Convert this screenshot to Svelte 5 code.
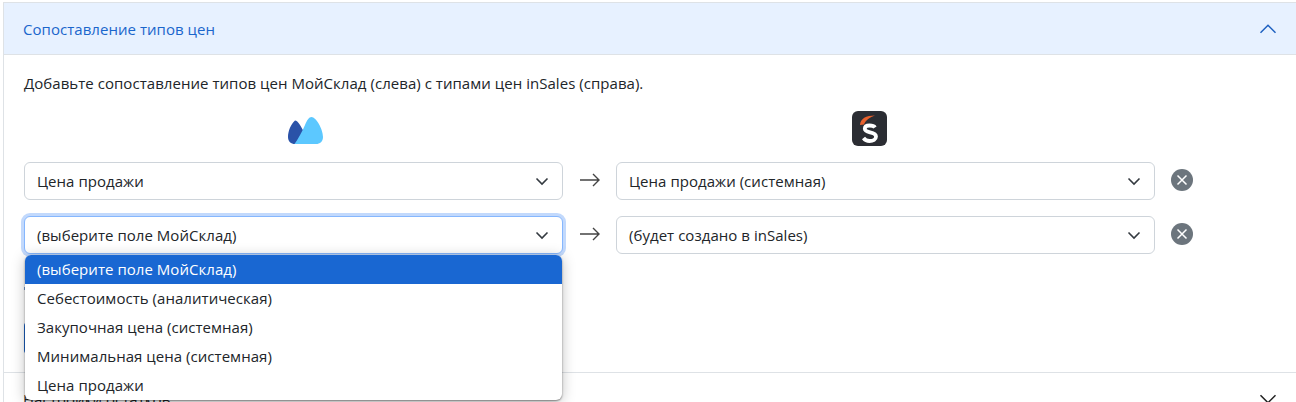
<script>
	const leftOptions = [
		"(выберите поле МойСклад)",
		"Себестоимость (аналитическая)",
		"Закупочная цена (системная)",
		"Минимальная цена (системная)",
		"Цена продажи",
	]
	const rows = [
		{left: "Цена продажи", right: "Цена продажи (системная)"},
		{left: "(выберите поле МойСклад)", right: "(будет создано в inSales)", open: true},
	]
</script>

<div class="accordion">
	<section class="item">
		<header class="head active">
			<span>Сопоставление типов цен</span>
			<svg class="chev" viewBox="0 0 16 16" width="20" height="20">
				<path d="M2 11 L8 5 L14 11" fill="none" stroke="#1e60c0" stroke-width="1.2" />
			</svg>
		</header>
		<div class="body">
			<p class="hint">Добавьте сопоставление типов цен МойСклад (слева) с типами цен inSales (справа).</p>
			<div class="row logos">
				<div class="col logo left">
					<svg viewBox="0 0 35 27" width="35" height="27">
						<path d="M7 3.500 C3 7 0 14 0 20 C0 24.500 3 27 7 27 L12 27 L16 15 C13 9.500 10 3.500 7 3.500 Z" fill="#2a52a8" />
						<path d="M23.500 0 C21 0 19 3 17 8 C14 15 10 22 6.500 27 L28 27 C32 27 35 24.500 35 20 C35 12 28 0 23.500 0 Z" fill="#5cc8ff" />
					</svg>
				</div>
				<div class="gap"></div>
				<div class="col logo right">
					<svg viewBox="0 0 35 35" width="35" height="35">
						<rect width="35" height="35" rx="6" fill="#2b2d33" />
						<path d="M8 14 C8.500 7.500 14 4.500 23 4.500 C18 6.500 13.500 9 12 13.500 Z" fill="#e8602c" />
						<path d="M23 16.500 C22 15 20 14.500 17.500 14.500 C14.500 14.500 12.800 15.800 12.800 17.800 C12.800 22.500 24 20 24 25.500 C24 28.500 21 30 17.500 30 C15 30 13 29 11.500 27" fill="none" stroke="#fff" stroke-width="3.800" />
					</svg>
				</div>
			</div>
			{#each rows as row}
				<div class="row">
					<div class="col">
						<div class="select" class:focus={row.open}>
							<span>{row.left}</span>
							<svg viewBox="0 0 16 16" width="16" height="16">
								<path d="M2.500 5.500 L8 11 L13.500 5.500" fill="none" stroke="#343a40" stroke-width="1.600" />
							</svg>
						</div>
						{#if row.open}
							<ul class="menu">
								{#each leftOptions as opt, i}
									<li class:sel={i === 0}>{opt}</li>
								{/each}
							</ul>
						{/if}
					</div>
					<div class="gap arrow">
						<svg viewBox="0 0 20 14" width="20" height="14">
							<path d="M0 7 H19 M13 1 L19 7 L13 13" fill="none" stroke="#444" stroke-width="1.400" />
						</svg>
					</div>
					<div class="col">
						<div class="select">
							<span>{row.right}</span>
							<svg viewBox="0 0 16 16" width="16" height="16">
								<path d="M2.500 5.500 L8 11 L13.500 5.500" fill="none" stroke="#343a40" stroke-width="1.600" />
							</svg>
						</div>
					</div>
					<svg class="remove" viewBox="0 0 22 22" width="22" height="22">
						<circle cx="11" cy="11" r="11" fill="#6c757d" />
						<path d="M6.500 6.500 L15.500 15.500 M15.500 6.500 L6.500 15.500" stroke="#fff" stroke-width="1.500" />
					</svg>
				</div>
			{/each}
			<div class="add-wrap">
				<span class="note-dot"></span>
				<button class="add" aria-label="Добавить"></button>
			</div>
		</div>
	</section>
	<section class="item">
		<header class="head">
			<span>Настройки остатков</span>
			<svg class="chev" viewBox="0 0 16 16" width="20" height="20">
				<path d="M2 5 L8 11 L14 5" fill="none" stroke="#222" stroke-width="1.200" />
			</svg>
		</header>
	</section>
</div>

<style>
	:global(body) {
		margin: 0;
		height: 402px;
		overflow: hidden;
		background: #fff;
	}

	.accordion {
		margin: 2px 0 0 3px;
		font-family: "Open Sans", "Noto Sans", sans-serif;
		font-size: 15px;
		letter-spacing: 0.04px;
		color: #212529;
		border-left: 1px solid #dee2e6;
	}

	.item {
		border-top: 1px solid #dee2e6;
	}

	.head {
		display: flex;
		justify-content: space-between;
		align-items: center;
		height: 52px;
		padding: 0 18px 0 19px;
	}

	.head.active {
		background: #e7f1ff;
		color: #1a66cc;
		box-shadow: inset 0 -1px 0 #dee2e6;
	}

	.body {
		height: 317px;
		padding: 0 20px;
	}

	.hint {
		margin: 0;
		padding-top: 18px;
		line-height: 20px;
	}

	.row {
		display: flex;
		align-items: center;
		margin-bottom: 16px;
	}

	.logos {
		margin: 18px 0 16px;
		height: 35px;
	}

	.col {
		position: relative;
		width: 539px;
		flex: none;
	}

	.logo {
		display: flex;
		justify-content: center;
		box-sizing: border-box;
	}

	.logo.left {
		padding: 4px 0 0 24px;
	}

	.logo.right {
		padding-right: 32px;
	}

	.gap {
		width: 53px;
		flex: none;
	}

	.arrow {
		display: flex;
		justify-content: center;
		margin-bottom: 2px;
	}

	.select {
		display: flex;
		justify-content: space-between;
		align-items: center;
		box-sizing: border-box;
		height: 38px;
		padding: 0 12px;
		border: 1px solid #ced4da;
		border-radius: 6px;
		background: #fff;
	}

	.select.focus {
		border-color: #86b7fe;
		box-shadow: 0 0 0 3px #c2d9fc;
	}

	.menu {
		position: absolute;
		z-index: 2;
		top: 39px;
		left: 1px;
		width: 537px;
		margin: 0;
		padding: 0;
		list-style: none;
		background: #fff;
		border-radius: 6px;
		overflow: hidden;
		box-shadow: 0 1px 2px rgba(0, 0, 0, 0.45), 0 2px 14px rgba(0, 0, 0, 0.25);
	}

	.menu li {
		height: 29px;
		line-height: 29px;
		padding-left: 12px;
	}

	.menu li.sel {
		background: #1967d2;
		color: #fff;
	}

	.remove {
		margin: 0 0 2px 16px;
		flex: none;
	}

	.add-wrap {
		display: flow-root;
		height: 64px;
		padding-top: 17px;
	}

	.note-dot {
		display: block;
		width: 6px;
		height: 3px;
		background: #7a9fd0;
	}

	.add {
		display: block;
		width: 100px;
		height: 32px;
		margin-top: 32px;
		padding: 0;
		border: none;
		border-radius: 4px;
		background: #1b62c4;
	}
</style>
